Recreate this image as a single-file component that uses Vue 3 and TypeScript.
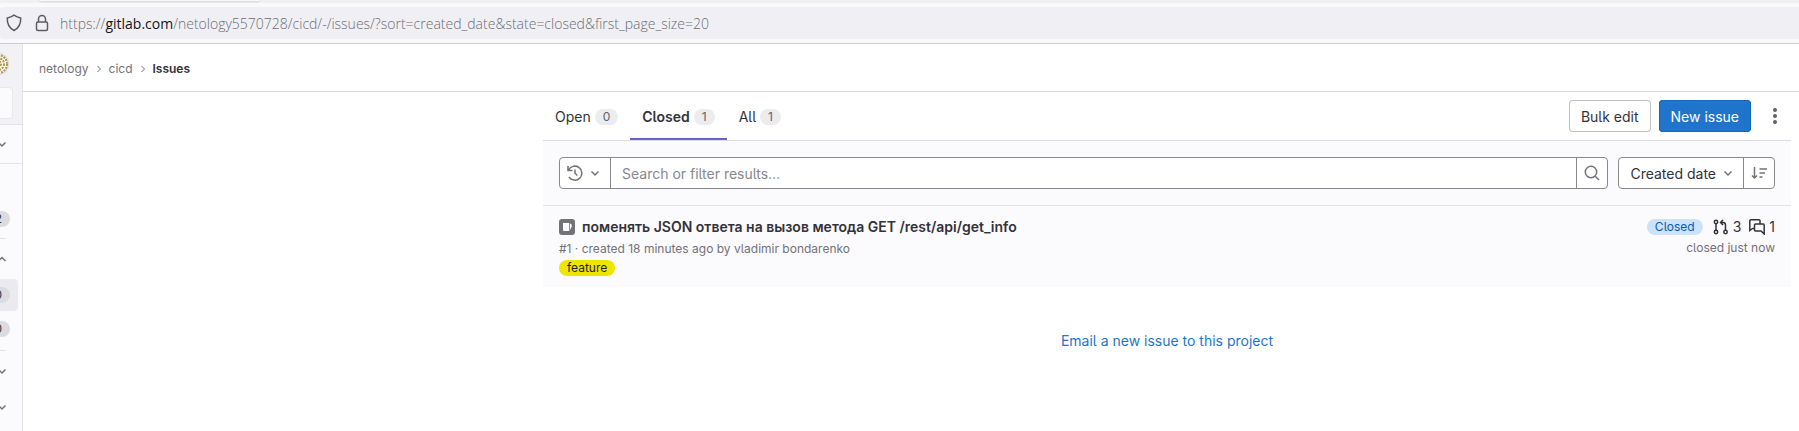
<script setup lang="ts">
import { ref } from 'vue'

interface Tab {
  name: string
  count: number
}

const tabs: Tab[] = [
  { name: 'Open', count: 0 },
  { name: 'Closed', count: 1 },
  { name: 'All', count: 1 },
]
const active = ref('Closed')
const query = ref('')
const chevronDown = 'M4.500 6.500L8 10l3.500-3.500'
const chevronUp = 'M4.500 10L8 6.500l3.500 3.500'
</script>

<template>
  <div class="window">
    <header class="chrome">
      <div class="tabstrip"><div class="browser-tab"></div></div>
      <div class="toolbar">
        <div class="address">
          <svg class="shield" width="16" height="18" viewBox="0 0 16 18"><path d="M8 1.200C10 2.600 12.300 3.500 14.700 4c.3 5-1.700 9.800-6.700 12.500C3 13.800 1 9 1.300 4 3.700 3.500 6 2.600 8 1.200z" /></svg>
          <svg class="lock" width="14" height="18" viewBox="0 0 14 18"><rect x="1.500" y="8" width="11" height="8.500" rx="1.500" /><path d="M3.500 8V5a3.500 3.500 0 0 1 7 0v3" /></svg>
          <span class="url">https://<b>gitlab.com</b>/netology5570728/cicd/-/issues/?sort=created_date&amp;state=closed&amp;first_page_size=20</span>
        </div>
      </div>
    </header>

    <div class="app">
      <aside class="sidebar">
        <div class="side-top">
          <svg class="avatar" width="22" height="22" viewBox="0 0 22 22">
            <circle cx="11" cy="11" r="10.500" fill="#fff" stroke="#ddd" />
            <g fill="none" stroke="#b3924a" stroke-width="2">
              <circle cx="11" cy="11" r="9" stroke-dasharray="2 1" />
              <circle cx="11" cy="11" r="6" stroke-dasharray="2 1" />
              <circle cx="11" cy="11" r="3" stroke-dasharray="2 1" />
            </g>
          </svg>
          <div class="side-search"></div>
        </div>
        <div class="side-context"><svg class="chev" width="16" height="16" viewBox="0 0 16 16"><path :d="chevronDown" /></svg></div>
        <nav class="side-nav">
          <div class="side-row first"><span class="side-badge">2</span></div>
          <div class="side-line"></div>
          <div class="side-row"><svg class="chev" width="16" height="16" viewBox="0 0 16 16"><path :d="chevronUp" /></svg></div>
          <div class="side-row current"><span class="side-badge">0</span></div>
          <div class="side-row"><span class="side-badge">0</span></div>
          <div class="side-line"></div>
          <div class="side-row"><svg class="chev" width="16" height="16" viewBox="0 0 16 16"><path :d="chevronDown" /></svg></div>
          <div class="side-row"><svg class="chev" width="16" height="16" viewBox="0 0 16 16"><path :d="chevronDown" /></svg></div>
        </nav>
      </aside>

      <main class="page">
        <nav class="crumbs" aria-label="Breadcrumb">
          <a href="#">netology</a>
          <svg width="8" height="8" viewBox="0 0 8 8"><path d="M2.500 1l3 3-3 3" /></svg>
          <a href="#">cicd</a>
          <svg width="8" height="8" viewBox="0 0 8 8"><path d="M2.500 1l3 3-3 3" /></svg>
          <a href="#" class="here">Issues</a>
        </nav>

        <section class="content">
          <div class="tabbar">
            <div class="tabs" role="tablist">
              <button v-for="t in tabs" :key="t.name" type="button" role="tab" class="tab" :class="{ selected: t.name === active }" :aria-selected="t.name === active" @click="active = t.name">
                {{ t.name }}<span class="count">{{ t.count }}</span>
              </button>
            </div>
            <div class="actions">
              <button type="button" class="btn">Bulk edit</button>
              <button type="button" class="btn primary">New issue</button>
              <button type="button" class="more" aria-label="Actions">
                <svg width="16" height="16" viewBox="0 0 16 16"><circle cx="8" cy="2" r="2" /><circle cx="8" cy="8" r="2" /><circle cx="8" cy="14" r="2" /></svg>
              </button>
            </div>
          </div>

          <div class="filters">
            <form class="search" @submit.prevent>
              <button type="button" class="history" aria-label="Recent searches">
                <svg width="16" height="16" viewBox="0 0 16 16"><path d="M1.500 5.200A7 7 0 1 1 2 12M1 1v4.500h4.500M8 4.500V8.200l2.300 2.300" /></svg>
                <svg width="16" height="16" viewBox="0 0 16 16"><path :d="chevronDown" /></svg>
              </button>
              <input v-model="query" type="text" aria-label="Search or filter results" placeholder="Search or filter results…" />
              <button type="submit" class="go" aria-label="Search">
                <svg width="16" height="16" viewBox="0 0 16 16"><circle cx="7" cy="7" r="5.700" /><path d="M11.200 11.200L15 15" /></svg>
              </button>
            </form>
            <div class="sort">
              <button type="button" class="sort-by"><span>Created date</span>
                <svg width="16" height="16" viewBox="0 0 16 16"><path :d="chevronDown" /></svg>
              </button>
              <button type="button" class="direction" aria-label="Sort direction">
                <svg width="16" height="16" viewBox="0 0 16 16"><path d="M3.500 2v11M1 10.500l2.500 2.500L6 10.500M8.500 4H16M8.500 8H14M8.500 12H11.500" /></svg>
              </button>
            </div>
          </div>

          <article class="issue">
            <div class="info">
              <h2 class="title">
                <svg width="16" height="16" viewBox="0 0 16 16"><rect width="16" height="16" rx="3" fill="#737278" /><path d="M4 4h6.200v8H5a1 1 0 0 1-1-1z" fill="#fff" /><path d="M11 4.500l1.700 1v2L11 11z" fill="#fff" /></svg>
                <a href="#">поменять JSON ответа на вызов метода GET /rest/api/get_info</a>
              </h2>
              <div class="meta">#1 · created 18 minutes ago by <a href="#">vladimir bondarenko</a></div>
              <a href="#" class="label">feature</a>
            </div>
            <div class="state">
              <div class="state-row">
                <span class="closed">Closed</span>
                <span class="stat">
                  <svg width="16" height="16" viewBox="0 0 16 16"><circle cx="3" cy="3" r="1.700" /><circle cx="3" cy="13" r="1.700" /><circle cx="12.500" cy="13" r="1.700" /><path d="M3 4.700v6.600M12.500 11.300V6a2.500 2.500 0 0 0-2.500-2.500H8M10 1L7.500 3.500 10 6" /></svg>3
                </span>
                <span class="stat">
                  <svg width="16" height="16" viewBox="0 0 16 16"><path d="M3.500 9.500L.8 11.500V2A1.200 1.200 0 0 1 2 .8h8a1 1 0 0 1 1 1V5M3.500 9.500h2M6.500 5h7.700a1 1 0 0 1 1 1v9L12 12H6.500a1 1 0 0 1-1-1V6a1 1 0 0 1 1-1z" /></svg>1
                </span>
              </div>
              <div class="when">closed just now</div>
            </div>
          </article>

          <div class="email"><a href="#">Email a new issue to this project</a></div>
        </section>
      </main>
    </div>
  </div>
</template>

<style>
body {
  background: #fff;
}
</style>

<style scoped>
* {
  box-sizing: border-box;
}
.window {
  min-height: 100vh;
  display: flex;
  flex-direction: column;
  overflow: hidden;
  font-family: Inter, "Noto Sans", sans-serif;
  font-feature-settings: "cv05";
  font-size: 14px;
  line-height: 20px;
  color: #333238;
}
button,
input {
  font: inherit;
  font-feature-settings: inherit;
  color: inherit;
  margin: 0;
  padding: 0;
  border: 0;
  background: none;
}
a {
  color: inherit;
  text-decoration: none;
}
svg {
  flex: none;
  fill: none;
  stroke: currentColor;
  stroke-width: 1.5;
}
.chrome {
  border-bottom: 1px solid #cccccc;
}
.tabstrip {
  height: 3px;
  background: #f0f0f0;
  padding-left: 40px;
  overflow: hidden;
}
.browser-tab {
  width: 219px;
  height: 1px;
  background: #f9f9fb;
  box-shadow: 0 0 3px #999;
}
.toolbar {
  padding: 4px 0;
  background: #f9f9fb;
}
.address {
  height: 32px;
  display: flex;
  align-items: center;
  padding-left: 6px;
  background: #f0f0f4;
  color: #5b5b66;
  border-radius: 4px 0 0 4px;
}
.lock {
  margin-left: 13px;
}
.url {
  margin-left: 11px;
  padding-top: 2px;
  font-family: "Open Sans", "Noto Sans", sans-serif;
  font-size: 14px;
  font-weight: 300;
  color: #6c6c74;
  white-space: nowrap;
}
.url b {
  font-weight: 400;
  color: #15141a;
}
.app {
  flex: 1;
  display: flex;
}
.sidebar {
  width: 23px;
  flex: none;
  overflow: hidden;
  background: #fbfafd;
  border-right: 1px solid #e3e2e8;
}
.side-top {
  height: 81px;
  display: flex;
  flex-direction: column;
  align-items: flex-end;
  padding: 9px 9px 5px 0;
  background: #f2f1f5;
  border-bottom: 1px solid #e3e2e8;
}
.avatar {
  margin-right: 4px;
}
.side-search {
  width: 232px;
  height: 32px;
  margin-top: auto;
  border: 1px solid #e8e7ec;
  border-radius: 4px;
  background: #fbfafd;
}
.side-context {
  height: 39px;
  display: flex;
  align-items: center;
  justify-content: flex-end;
  padding-right: 12px;
  border-bottom: 1px solid #e3e2e8;
}
.chev {
  color: #737278;
}
.side-nav {
  display: flex;
  flex-direction: column;
}
.side-row {
  height: 36px;
  display: flex;
  align-items: center;
  justify-content: flex-end;
  margin-right: 4px;
  padding-right: 8px;
}
.side-row.first {
  height: 32px;
  margin-top: 39px;
}
.side-row.current {
  height: 32px;
  margin-top: 2px;
  background: #ebeaee;
  border-radius: 0 4px 4px 0;
}
.side-badge {
  flex: none;
  padding: 0 8px;
  border-radius: 8px;
  background: #dcdcde;
  font-size: 12px;
  line-height: 16px;
}
.side-line {
  height: 1px;
  margin: 3px 16px 2px 0;
  background: #e3e2e8;
}
.page {
  flex: 1;
  min-width: 0;
}
.crumbs {
  height: 48px;
  display: flex;
  align-items: center;
  gap: 6px;
  padding: 2px 0 0 16px;
  border-bottom: 1px solid #dcdcde;
  font-size: 12px;
  line-height: 16px;
  color: #737278;
}
.crumbs svg {
  stroke-width: 1;
}
.here {
  font-weight: 600;
  color: #333238;
}
.content {
  max-width: 1248px;
  margin: 0 8px 0 auto;
}
.tabbar {
  display: flex;
  justify-content: space-between;
  border-bottom: 1px solid #dcdcde;
}
.tabs {
  display: flex;
}
.tab {
  height: 48px;
  display: flex;
  align-items: center;
  gap: 4px;
  padding: 2px 12px 0;
  cursor: pointer;
}
.tab.selected {
  font-weight: 600;
  box-shadow: inset 0 -2px #6666c4;
}
.count {
  padding: 0 8px;
  border-radius: 8px;
  background: #ececef;
  font-size: 12px;
  font-weight: 400;
  line-height: 16px;
  color: #626168;
}
.actions {
  display: flex;
  align-items: center;
  gap: 8px;
}
.btn {
  height: 32px;
  padding: 2px 12px 0;
  border-radius: 4px;
  background: #fff;
  box-shadow: inset 0 0 0 1px #bfbfc3;
}
.btn.primary {
  background: #1f75cb;
  box-shadow: inset 0 0 0 1px #1068bf;
  color: #fff;
}
.more {
  height: 32px;
  width: 32px;
  display: flex;
  align-items: center;
  justify-content: center;
}
.more svg {
  fill: #626168;
  stroke: none;
}
.filters {
  display: flex;
  gap: 10px;
  padding: 16px;
  background: #fbfafd;
  border-bottom: 1px solid #e3e2e8;
}
.search,
.sort {
  height: 32px;
  display: flex;
  border: 1px solid #89888d;
  border-radius: 4px;
  background: #fff;
}
.search {
  flex: 1;
}
.filters svg {
  color: #737278;
}
.history {
  display: flex;
  align-items: center;
  gap: 4px;
  padding: 0 7px;
}
.search input {
  flex: 1;
  min-width: 0;
  padding: 2px 11px 0;
  border: solid #89888d;
  border-width: 0 1px;
  outline: 0;
}
.search input::placeholder {
  color: #89888d;
  opacity: 1;
}
.go,
.direction {
  width: 30px;
  display: flex;
  align-items: center;
  justify-content: center;
}
.sort-by {
  display: flex;
  align-items: center;
  gap: 4px;
  padding: 0 7px 0 11px;
  border-right: 1px solid #89888d;
}
.sort-by span {
  padding-top: 2px;
}
.issue {
  display: flex;
  justify-content: space-between;
  padding: 11px 16px;
  background: #fbfafd;
}
.title {
  display: flex;
  align-items: center;
  gap: 7px;
  margin: 0;
  font-size: 14px;
  font-weight: 600;
  line-height: 20px;
}
.title svg {
  stroke: none;
}
.meta,
.when {
  font-size: 12px;
  line-height: 20px;
  color: #737278;
}
.meta {
  padding-top: 2px;
}
.when {
  padding-top: 1px;
}
.label,
.closed {
  padding: 0 8px;
  border-radius: 8px;
  font-size: 12px;
  line-height: 16px;
}
.label {
  display: block;
  width: fit-content;
  margin-top: 1px;
  background: #eee600;
  color: #1f1e24;
}
.state {
  display: flex;
  flex-direction: column;
  align-items: flex-end;
}
.state-row {
  display: flex;
  align-items: center;
}
.closed {
  background: #cbe2f9;
  color: #0b5cad;
  margin-right: 2px;
}
.stat {
  display: flex;
  align-items: center;
  gap: 4px;
  margin-left: 8px;
}
.email {
  padding: 44px 0 0;
  text-align: center;
  color: #1f75cb;
}
</style>
